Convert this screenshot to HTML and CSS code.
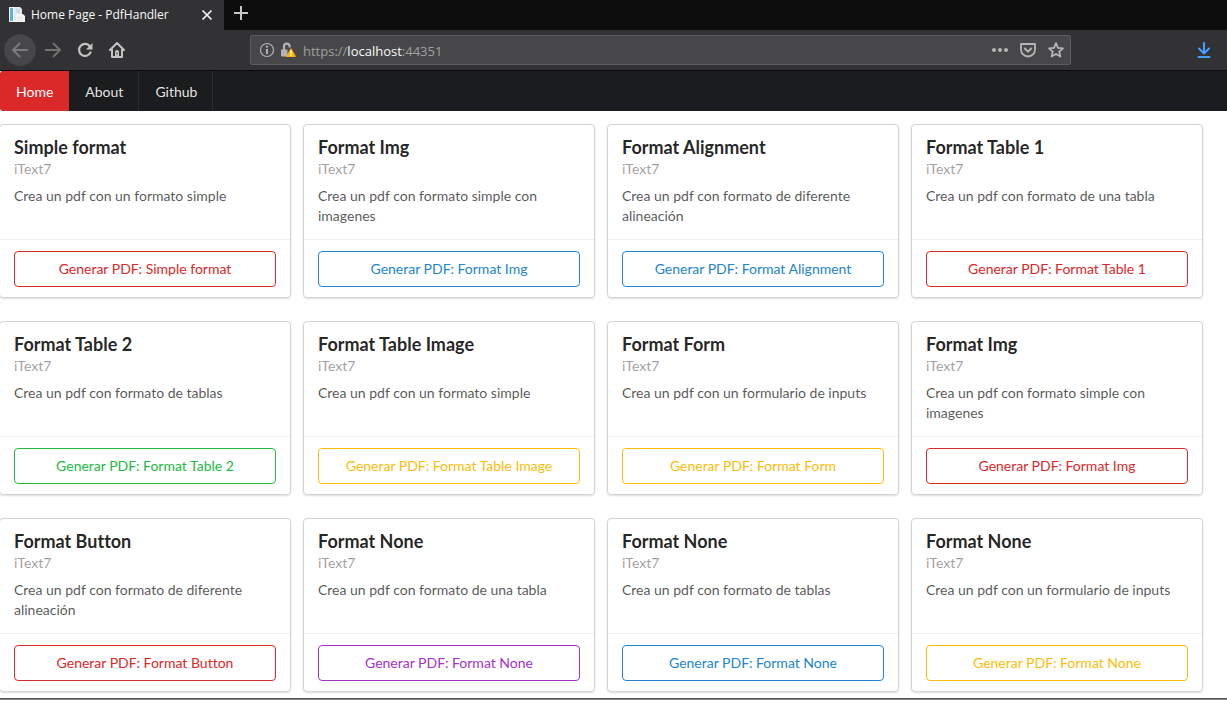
FILE: index.html
```html
<!DOCTYPE html>
<html lang="es">
<head>
<meta charset="utf-8">
<meta name="viewport" content="width=device-width, initial-scale=1">
<title>Home Page - PdfHandler</title>
<link rel="stylesheet" href="styles.css">
</head>
<body>
<header class="browser">
  <div class="tabs">
    <div class="tab">
      <svg class="favicon" width="16" height="16" viewBox="0 0 16 16" aria-hidden="true"><path d="M0 0h9v15H0z" fill="#f2f6f8"/><path d="M1 1h3v13H1z" fill="#65aed6"/><path d="M5 0h6l2 2v12H5z" fill="#e3eaed"/><path d="M7 3h4M7 5h4" stroke="#b9ced8"/><path d="M7 7h7l2 2v6H7z" fill="#f5f5f5"/><path d="M8 10.500h6M8 13h6" stroke="#dde1e3"/></svg>
      <span class="tab-title">Home Page - PdfHandler</span>
      <button class="icon-button tab-close" aria-label="Close tab"><svg width="12" height="12" viewBox="0 0 12 12"><path d="M1.500 1.500l9 9M10.500 1.500l-9 9" fill="none" stroke="#f4f4f4" stroke-width="1.700"/></svg></button>
    </div>
    <button class="icon-button new-tab" aria-label="New tab"><svg width="14" height="14" viewBox="0 0 14 14"><path d="M7 0v14M0 7h14" stroke="#c8c8c8" stroke-width="2"/></svg></button>
  </div>
  <div class="toolbar">
    <div class="history">
      <button class="icon-button back" aria-label="Back"><svg width="16" height="16" viewBox="0 0 16 16"><path d="M15.500 8H1M7.500 1.500L1 8l6.500 6.500" fill="none" stroke="#7b7b7c" stroke-width="1.800" stroke-linecap="round" stroke-linejoin="round"/></svg></button>
      <button class="icon-button tool" aria-label="Forward"><svg width="16" height="16" viewBox="0 0 16 16"><path d="M.5 8H15M8.500 1.500L15 8l-6.500 6.500" fill="none" stroke="#737374" stroke-width="1.800" stroke-linecap="round" stroke-linejoin="round"/></svg></button>
      <button class="icon-button tool" aria-label="Reload"><svg width="16" height="16" viewBox="0 0 16 16"><path d="M12.800 4.200A6 6 0 1 0 13.500 10.500" fill="none" stroke="#c3c3c4" stroke-width="2.200" stroke-linecap="round"/><path d="M15.500 1v6.500H9z" fill="#c3c3c4"/></svg></button>
      <button class="icon-button tool" aria-label="Home"><svg width="16" height="16" viewBox="0 0 16 16"><path d="M1 8l7-7 7 7M3 7.500V15h10V7.500" fill="none" stroke="#c3c3c4" stroke-width="2" stroke-linecap="round" stroke-linejoin="round"/><path d="M6 15V9.500Q6 8 8 8t2 1.500V15z" fill="#c3c3c4"/><path d="M8 10.500v2" stroke="#323234"/></svg></button>
    </div>
    <div class="address">
      <button class="icon-button" aria-label="Site information"><svg width="16" height="16" viewBox="0 0 16 16"><circle cx="8" cy="8" r="6.500" fill="none" stroke="#b3b3b4" stroke-width="1.200"/><path d="M8 7v5" stroke="#b3b3b4" stroke-width="2"/><circle cx="8" cy="4.700" r="1.100" fill="#b3b3b4"/></svg></button>
      <button class="icon-button lock" aria-label="Connection is not secure"><svg width="16" height="16" viewBox="0 0 16 16"><path d="M4 8V4.500a2.800 2.800 0 0 1 5.600 0V5.500" fill="none" stroke="#b3b3b4" stroke-width="2.200"/><path d="M1 7.500h6.500v7H2a1 1 0 0 1-1-1z" fill="#b3b3b4"/><path d="M11 7l4.200 7.300H6.800z" fill="#ffb300" stroke="#ffb300" stroke-width="1.200" stroke-linejoin="round"/><path d="M11 8.500v3M11 12.500v1.500" stroke="#fff" stroke-width="1.400"/></svg></button>
      <div class="url" role="textbox" aria-label="Address" contenteditable="true" spellcheck="false">https://<span class="host">localhost</span>:44351</div>
      <div class="page-actions">
        <button class="icon-button" aria-label="Page actions"><svg width="16" height="16" viewBox="0 0 16 16" fill="#b5b5b6"><circle cx="2" cy="8" r="2"/><circle cx="8" cy="8" r="2"/><circle cx="14" cy="8" r="2"/></svg></button>
        <button class="icon-button" aria-label="Save to Pocket"><svg width="16" height="16" viewBox="0 0 16 16" fill="none" stroke="#b5b5b6" stroke-linejoin="round" stroke-linecap="round"><path d="M1 2h14v5.500a7 7 0 0 1-14 0z" stroke-width="1.800"/><path d="M4.800 6.500L8 9.700l3.200-3.200" stroke-width="1.900"/></svg></button>
        <button class="icon-button" aria-label="Bookmark this page"><svg width="16" height="16" viewBox="0 0 16 16"><path d="M8 1.200l2 4.600 5 .5-3.800 3.300 1.200 5L8 12l-4.400 2.600 1.200-5L1 6.300l5-.5z" fill="none" stroke="#b5b5b6" stroke-width="1.800" stroke-linejoin="round"/></svg></button>
      </div>
    </div>
    <button class="icon-button downloads" aria-label="Downloads"><svg width="14" height="16" viewBox="0 0 14 16"><path d="M7 1v10M2 6.500l5 5 5-5M1.500 15h11" fill="none" stroke="#45a1ff" stroke-width="2" stroke-linecap="round" stroke-linejoin="round"/></svg></button>
  </div>
</header>
<nav class="menu">
  <a class="item active" href="#">Home</a>
  <a class="item" href="#">About</a>
  <a class="item" href="#">Github</a>
</nav>
<main class="cards">
  <article class="card"><div class="content"><h2 class="header">Simple format</h2><div class="meta">iText7</div><p class="description">Crea un pdf con un formato simple</p></div><div class="extra"><button class="button red">Generar PDF: Simple format</button></div></article>
  <article class="card"><div class="content"><h2 class="header">Format Img</h2><div class="meta">iText7</div><p class="description">Crea un pdf con formato simple con imagenes</p></div><div class="extra"><button class="button blue">Generar PDF: Format Img</button></div></article>
  <article class="card"><div class="content"><h2 class="header">Format Alignment</h2><div class="meta">iText7</div><p class="description">Crea un pdf con formato de diferente alineación</p></div><div class="extra"><button class="button blue">Generar PDF: Format Alignment</button></div></article>
  <article class="card"><div class="content"><h2 class="header">Format Table 1</h2><div class="meta">iText7</div><p class="description">Crea un pdf con formato de una tabla</p></div><div class="extra"><button class="button red">Generar PDF: Format Table 1</button></div></article>
  <article class="card"><div class="content"><h2 class="header">Format Table 2</h2><div class="meta">iText7</div><p class="description">Crea un pdf con formato de tablas</p></div><div class="extra"><button class="button green">Generar PDF: Format Table 2</button></div></article>
  <article class="card"><div class="content"><h2 class="header">Format Table Image</h2><div class="meta">iText7</div><p class="description">Crea un pdf con un formato simple</p></div><div class="extra"><button class="button yellow">Generar PDF: Format Table Image</button></div></article>
  <article class="card"><div class="content"><h2 class="header">Format Form</h2><div class="meta">iText7</div><p class="description">Crea un pdf con un formulario de inputs</p></div><div class="extra"><button class="button yellow">Generar PDF: Format Form</button></div></article>
  <article class="card"><div class="content"><h2 class="header">Format Img</h2><div class="meta">iText7</div><p class="description">Crea un pdf con formato simple con imagenes</p></div><div class="extra"><button class="button red">Generar PDF: Format Img</button></div></article>
  <article class="card"><div class="content"><h2 class="header">Format Button</h2><div class="meta">iText7</div><p class="description">Crea un pdf con formato de diferente alineación</p></div><div class="extra"><button class="button red">Generar PDF: Format Button</button></div></article>
  <article class="card"><div class="content"><h2 class="header">Format None</h2><div class="meta">iText7</div><p class="description">Crea un pdf con formato de una tabla</p></div><div class="extra"><button class="button purple">Generar PDF: Format None</button></div></article>
  <article class="card"><div class="content"><h2 class="header">Format None</h2><div class="meta">iText7</div><p class="description">Crea un pdf con formato de tablas</p></div><div class="extra"><button class="button blue">Generar PDF: Format None</button></div></article>
  <article class="card"><div class="content"><h2 class="header">Format None</h2><div class="meta">iText7</div><p class="description">Crea un pdf con un formulario de inputs</p></div><div class="extra"><button class="button yellow">Generar PDF: Format None</button></div></article>
</main>
<hr class="rule">
</body>
</html>
```

FILE: styles.css
```css
* {
  box-sizing: border-box;
}

body {
  margin: 0;
  background: #fff;
  color: rgba(0, 0, 0, 0.87);
  font-family: Lato, "Liberation Sans", sans-serif;
  font-size: 14px;
  font-variant-ligatures: none;
  line-height: 20px;
  overflow-x: hidden;
}

svg {
  display: block;
}

/* Browser chrome */
.browser {
  background: #323234;
  border-bottom: 1px solid #0c0c0d;
  color: #f9f9fa;
  font-family: "Open Sans", "Noto Sans", sans-serif;
}

.icon-button {
  display: flex;
  align-items: center;
  justify-content: center;
  flex: none;
  padding: 0;
  border: 0;
  background: none;
}

.tabs {
  display: flex;
  height: 30px;
  background: #0c0c0d;
}

.tab {
  display: flex;
  align-items: center;
  width: 224px;
  padding: 0 11px 0 9px;
  gap: 6px;
  background: #323234;
  font-size: 12px;
}

.tab-title {
  flex: 1;
  white-space: nowrap;
}

.new-tab {
  width: 34px;
  padding-bottom: 4px;
}

.toolbar {
  display: flex;
  align-items: center;
  height: 40px;
  padding: 0 16px 0 4px;
}

.history {
  display: flex;
  align-items: center;
  gap: 1px;
}

.back {
  width: 32px;
  height: 32px;
  border: 1px solid #464648;
  border-radius: 50%;
  background: #474749;
}

.tool {
  width: 31px;
  height: 32px;
}

.address {
  display: flex;
  align-items: center;
  flex: 1;
  height: 30px;
  margin: 0 126px 0 118px;
  padding: 0 6px 0 8px;
  border: 1px solid #5c5c5e;
  border-radius: 2px;
  background: #474749;
}

.lock {
  margin-left: 5px;
}

.url {
  flex: 1;
  margin-left: 7px;
  padding-top: 1px;
  color: #a0a0a2;
  font-size: 13px;
  white-space: nowrap;
}

.host {
  color: #f9f9fa;
}

.page-actions {
  display: flex;
  gap: 12px;
}

/* Site menu */
.menu {
  display: flex;
  height: 40px;
  border-radius: 4px 0 0 4px;
  background: #1b1c1d;
}

.item {
  padding: 11px 15px 9px 16px;
  border-right: 1px solid #2b2c2d;
  color: rgba(255, 255, 255, 0.9);
  text-decoration: none;
}

.item.active {
  border-color: #db2828;
  border-radius: 4px 0 0 4px;
  background: #db2828;
  color: #fff;
}

/* Cards */
.cards {
  display: grid;
  grid-template-columns: repeat(4, 1fr);
  gap: 23px 12px;
  margin: 13px 24px 6px -1px;
}

.card {
  display: flex;
  flex-direction: column;
  border: 1px solid #d4d4d5;
  border-radius: 4px;
  box-shadow: 0 1px 2px #dededf;
}

.content {
  flex: 1;
  min-height: 114px;
  padding: 11px 14px 13px;
}

.header {
  margin: 0;
  font-size: 18px;
  line-height: 22px;
}

.meta {
  margin-top: 1px;
  color: rgba(0, 0, 0, 0.4);
}

.description {
  margin: 7px 0 0;
  color: rgba(0, 0, 0, 0.68);
}

.extra {
  padding: 11px 14px 10px;
  border-top: 1px solid #efefef;
}

.button {
  display: block;
  width: 100%;
  height: 36px;
  padding: 0;
  border: 1px solid;
  border-radius: 4px;
  background: none;
  font: inherit;
}

.red {
  color: #db2828;
}

.blue {
  color: #2185d0;
}

.green {
  color: #21ba45;
}

.yellow {
  color: #fbbd08;
}

.purple {
  color: #a333c8;
}

.rule {
  height: 2px;
  margin: 0;
  border: 0;
  border-top: 1px solid #555;
  background: #858585;
}
```
